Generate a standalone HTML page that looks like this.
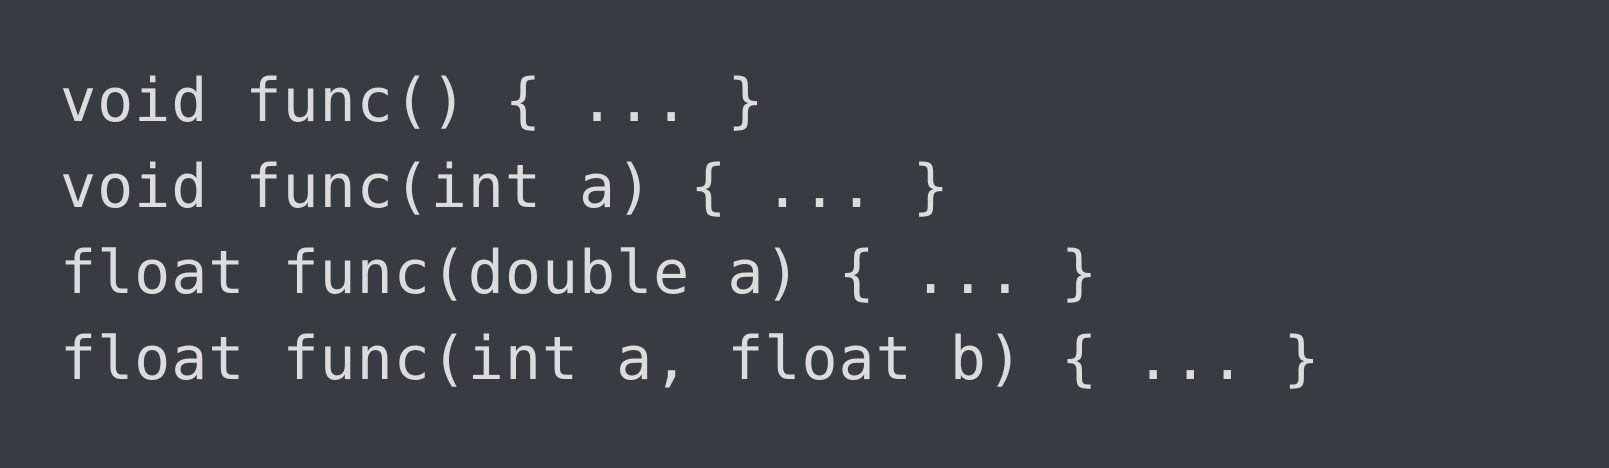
<!DOCTYPE html>
<html><head><meta charset="utf-8"><style>
html,body{margin:0;padding:0;width:1609px;height:468px;overflow:hidden;background:#393b43;}
pre{margin:0;position:absolute;left:60px;top:58px;font-family:"DejaVu Sans Mono","Liberation Mono",monospace;font-size:60px;line-height:86px;color:#dcdcdc;letter-spacing:0.95px;}
</style></head><body>
<pre>void func() { ... }
void func(int a) { ... }
float func(double a) { ... }
float func(int a, float b) { ... }</pre>
</body></html>
